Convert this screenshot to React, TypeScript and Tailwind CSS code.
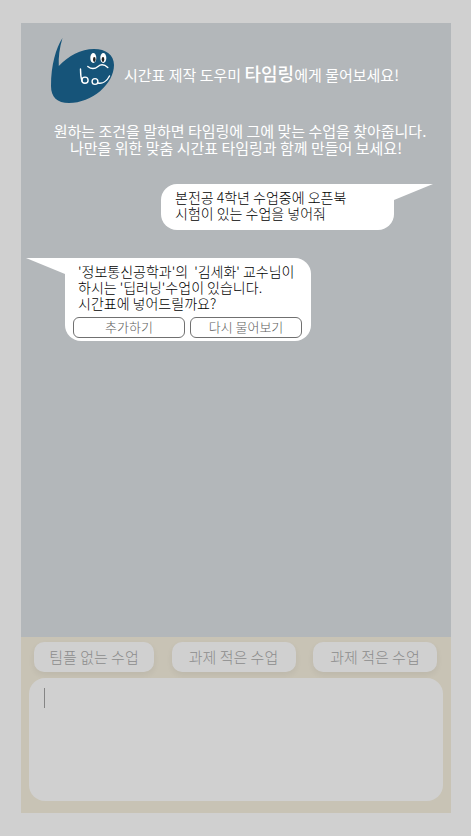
function Mascot() {
  return (
    <svg className="h-[68px] w-[68px] shrink-0" viewBox="0 0 68 68" role="img" aria-label="타임링">
      <path
        d="M14.5 0C8 10 3 27 3 48C3 59 9 65 21 65C44 65 66 46 66 27C66 17 58 11 46 11C33 11 20 18 10.800 28C10.300 19 11.500 10 14.5 0Z"
        fill="#165479"
      />
      <ellipse cx="45.300" cy="20" rx="3" ry="5" fill="#fff" />
      <ellipse cx="55.300" cy="20" rx="3" ry="5" fill="#fff" />
      <ellipse cx="46.300" cy="21.500" rx="1.300" ry="2.400" fill="#222" />
      <ellipse cx="55" cy="21.500" rx="1.300" ry="2.400" fill="#222" />
      <g fill="none" stroke="#fff" strokeWidth="1.4" strokeLinecap="round">
        <path d="M39.800 28.5C43 31 47 31 50 28.500C53 26 56.500 26.500 59.800 29.500" />
        <path d="M32.500 31C32.500 36 33 40 34 43" />
        <circle cx="37" cy="42.200" r="3.100" />
        <circle cx="47" cy="43.500" r="2.900" />
        <path d="M50 45C54.500 46 59 43 61.500 38" />
      </g>
    </svg>
  );
}

const suggestions = [
  { id: "team", label: "팀플 없는 수업", width: "w-[120px]" },
  { id: "light", label: "과제 적은 수업", width: "w-[124px]" },
  { id: "light-more", label: "과제 적은 수업", width: "w-[124px]" },
];

export default function App() {
  return (
    <div className="flex min-h-screen flex-col bg-[#d0d0d0] py-[23px] pr-5 pl-[21px] font-['Noto_Sans_CJK_KR','Noto_Sans',sans-serif]">
      <main className="flex flex-1 flex-col bg-[#b3b7ba]">
        <header className="pt-[15px] text-[15px] text-white">
          <div className="flex items-center pl-[27px]">
            <Mascot />
            <h1 className="ml-2 pt-1 leading-6 font-normal whitespace-nowrap">
              시간표 제작 도우미 <strong className="text-lg leading-6 font-medium">타임링</strong>에게 물어보세요!
            </h1>
          </div>
          <p className="mt-4 text-center leading-[17px] font-normal">
            <span className="block pl-2">원하는 조건을 말하면 타임링에 그에 맞는 수업을 찾아줍니다.</span>
            <span className="block">나만을 위한 맞춤 시간표 타임링과 함께 만들어 보세요!</span>
          </p>
        </header>

        <section className="flex flex-1 flex-col gap-7 pt-7 text-sm leading-4 font-light text-black" aria-label="대화">
          <div className="relative mr-[57px] w-[233px] self-end rounded-2xl rounded-tr-none bg-white pt-[5px] pr-3 pb-[9px] pl-3.5">
            <p>
              <span className="block">본전공 4학년 수업중에 오픈북</span>
              <span className="block">시험이 있는 수업을 넣어줘</span>
            </p>
            <svg className="absolute top-0 left-full h-4 w-[39px]" viewBox="0 0 39 16" aria-hidden="true">
              <path d="M0 0H39L0 16Z" fill="#fff" />
            </svg>
          </div>

          <div className="relative ml-11 w-[246px] rounded-2xl rounded-tl-none bg-white pt-[5px] pr-[9px] pb-[3px] pl-2">
            <p className="pl-[5px] whitespace-nowrap">
              <span className="block">'정보통신공학과'의&nbsp; '김세화' 교수님이</span>
              <span className="block">하시는 '딥러닝'수업이 있습니다.</span>
              <span className="block">시간표에 넣어드릴까요?</span>
            </p>
            <div className="mt-1.5 grid grid-cols-2 gap-[5px] text-[13px] text-[#606060]">
              <button type="button" className="flex h-[21px] items-center justify-center rounded-md border border-[#707070] pb-0.5">
                추가하기
              </button>
              <button type="button" className="flex h-[21px] items-center justify-center rounded-md border border-[#707070] pb-0.5">
                다시 물어보기
              </button>
            </div>
            <svg className="absolute top-0 right-full h-4 w-[39px]" viewBox="0 0 39 16" aria-hidden="true">
              <path d="M39 0H0L39 16Z" fill="#fff" />
            </svg>
          </div>
        </section>

        <footer className="bg-[#c8c3b5] px-2 pt-[5px] pb-3">
          <div className="flex justify-between pr-1.5 pl-[5px]">
            {suggestions.map((s) => (
              <button
                key={s.id}
                type="button"
                className={`${s.width} flex h-[30px] items-center justify-center rounded-[10px] bg-[#d0d0d0] text-[15px] font-light whitespace-nowrap text-[#8c8c8c] shadow-[0_3px_6px_rgba(0,0,0,0.06)]`}
              >
                {s.label}
              </button>
            ))}
          </div>
          <div className="relative mt-1.5">
            <textarea
              aria-label="메시지 입력"
              className="block h-[123px] w-full resize-none rounded-2xl bg-[#d0d0d0] px-4 py-2.5 text-[15px] text-[#707070] outline-none"
            />
            <span className="pointer-events-none absolute top-2.5 left-[15px] h-5 w-px bg-[#858585]" aria-hidden="true" />
          </div>
        </footer>
      </main>
    </div>
  );
}
